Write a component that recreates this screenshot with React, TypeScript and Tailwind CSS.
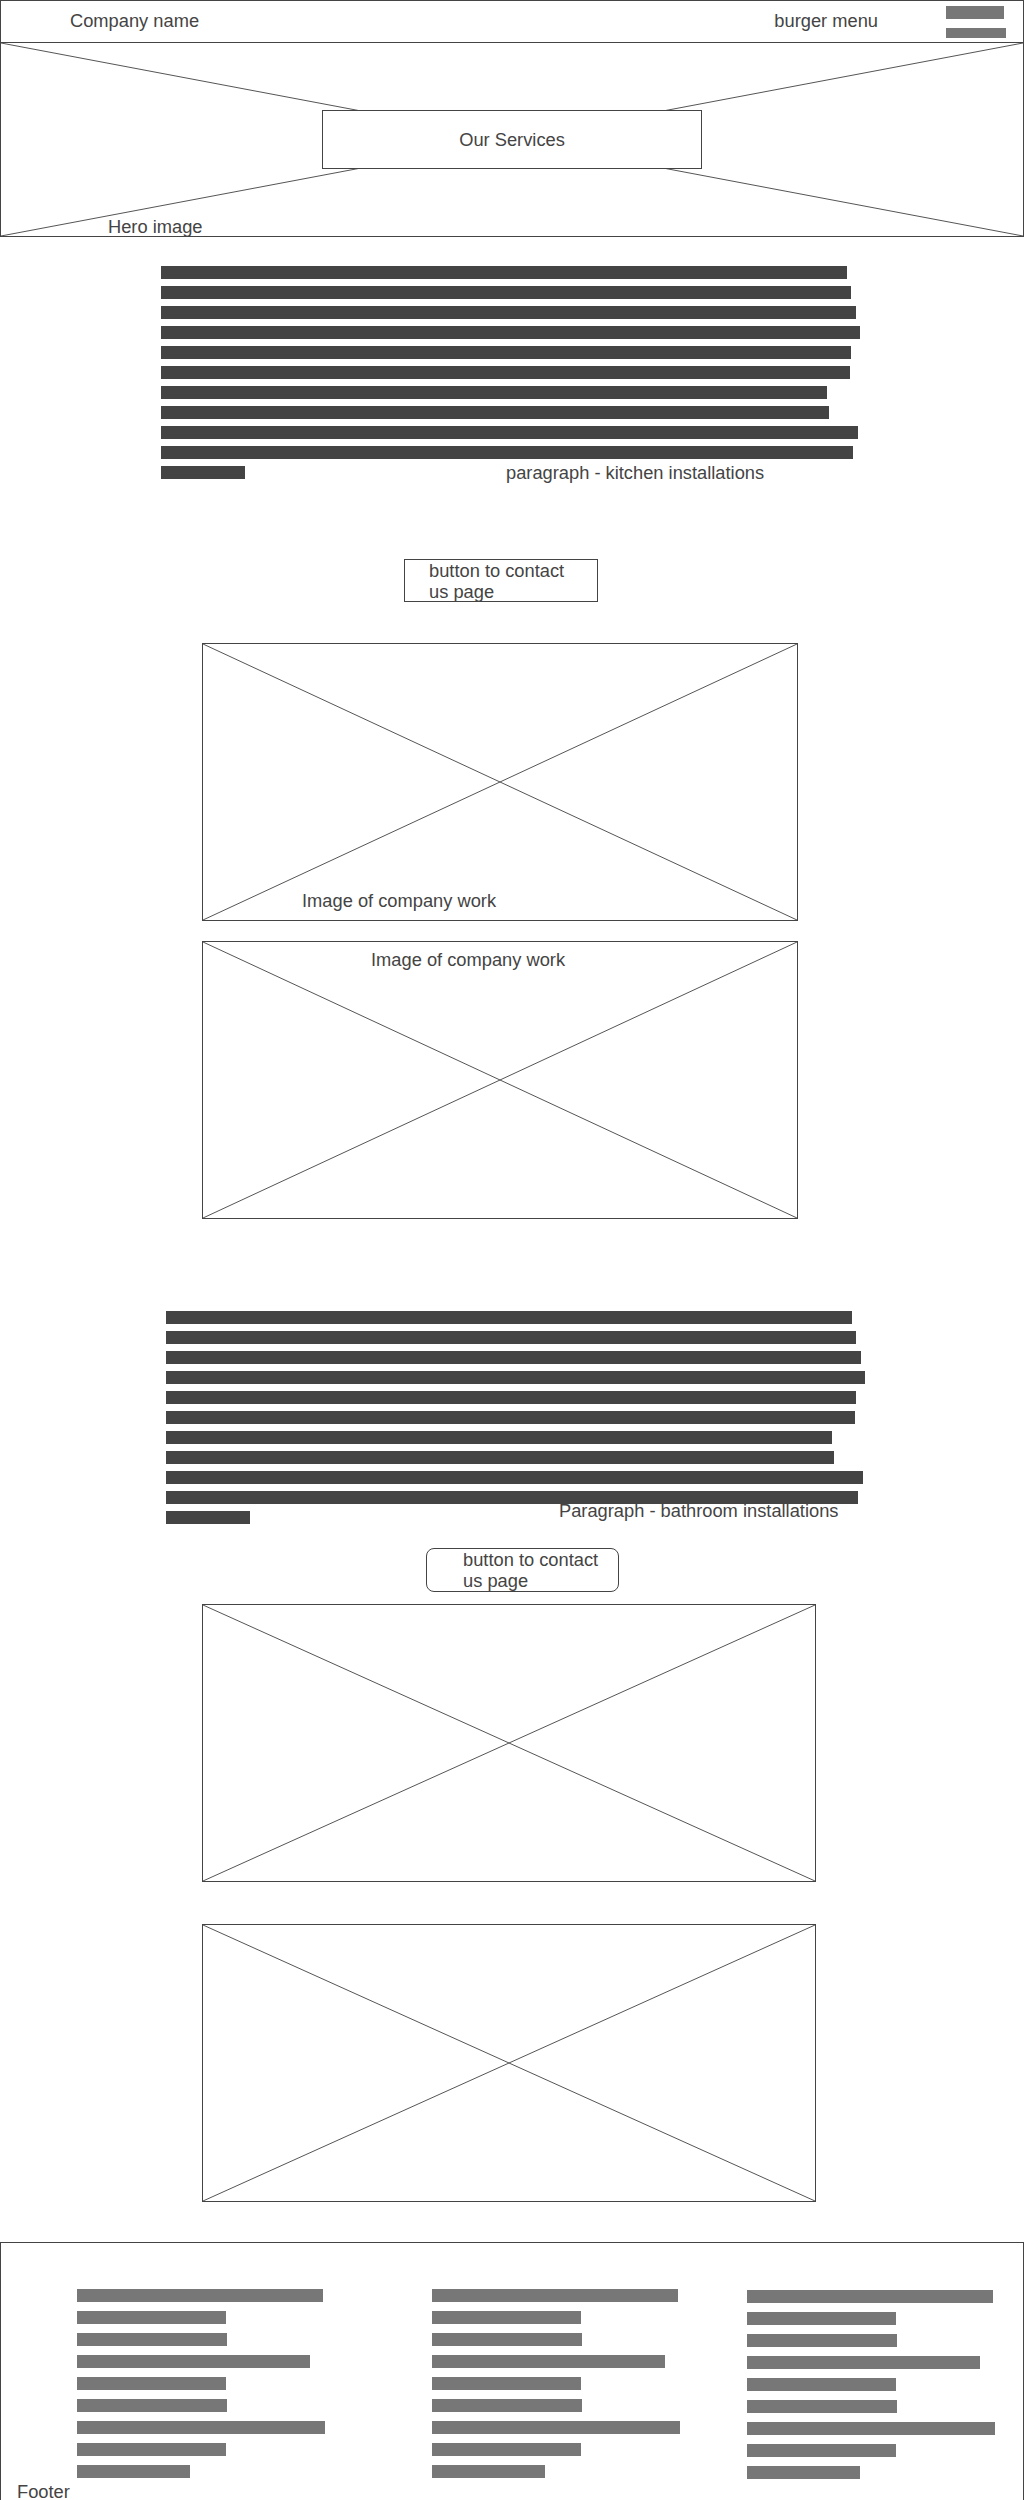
import React from "react";

const paragraphBars = [686, 690, 695, 699, 690, 689, 666, 668, 697, 692];
const footerBars = [246, 149, 150, 233, 149, 150, 248, 149, 113];

function Cross() {
  return (
    <svg
      className="absolute inset-0 h-full w-full"
      viewBox="0 0 100 100"
      preserveAspectRatio="none"
    >
      <line x1="0" y1="0" x2="100" y2="100" stroke="#555" strokeWidth="1" vectorEffect="non-scaling-stroke" />
      <line x1="100" y1="0" x2="0" y2="100" stroke="#555" strokeWidth="1" vectorEffect="non-scaling-stroke" />
    </svg>
  );
}

function Paragraph({ left, label, gap, lift }: { left: string; label: string; gap: string; lift: string }) {
  return (
    <div className={`${left} flex flex-col gap-[7px]`}>
      {paragraphBars.map((w, i) => (
        <div key={i} className="h-[13px] bg-[#444]" style={{ width: w }} />
      ))}
      <div className="flex items-start">
        <div className="h-[13px] w-[84px] shrink-0 bg-[#444]" />
        <span className={`${gap} ${lift} whitespace-nowrap leading-[20px]`}>{label}</span>
      </div>
    </div>
  );
}

function FooterColumn({ className }: { className: string }) {
  return (
    <div className={`flex flex-col gap-[9px] ${className}`}>
      {footerBars.map((w, i) => (
        <div key={i} className="h-[13px] bg-[#777]" style={{ width: w }} />
      ))}
    </div>
  );
}

export default function App() {
  return (
    <div className="min-h-[2500px] bg-white font-['Liberation_Sans',Arial,sans-serif] text-[18.3px] text-[#444]">
      {/* Header */}
      <header className="flex h-[43px] border border-[#444] leading-[20px]">
        <span className="ml-[69px] mt-[10px]">Company name</span>
        <span className="ml-auto mt-[10px]">burger menu</span>
        <div className="ml-[68px] mr-[17px] mt-[5px] flex flex-col items-start gap-[9px]">
          <div className="h-[13px] w-[58px] bg-[#777]" />
          <div className="h-[10px] w-[60px] bg-[#777]" />
        </div>
      </header>

      {/* Hero */}
      <section className="relative flex h-[194px] items-center justify-center border-x border-b border-[#444]">
        <Cross />
        <div className="relative flex h-[59px] w-[380px] items-center justify-center border border-[#444] bg-white">
          Our Services
        </div>
        <span className="absolute left-[107px] top-[174px] leading-[20px]">Hero image</span>
      </section>

      {/* Kitchen */}
      <div className="mt-[29px]">
        <Paragraph left="ml-[161px]" label="paragraph - kitchen installations" gap="ml-[261px]" lift="-mt-[3px]" />
      </div>

      <div className="ml-[404px] mt-[76px] h-[43px] w-[194px] border border-[#444] pl-[24px] leading-[21px]">
        button to contact
        <br />
        us page
      </div>

      <div className="relative ml-[202px] mt-[41px] flex h-[278px] w-[596px] flex-col justify-end border border-[#444] pb-[9px] pl-[99px]">
        <Cross />
        <span className="relative leading-[20px]">Image of company work</span>
      </div>
      <div className="relative ml-[202px] mt-[20px] h-[278px] w-[596px] border border-[#444] pl-[168px] pt-[4px]">
        <Cross />
        <span className="relative leading-[20px]">Image of company work</span>
      </div>

      {/* Bathroom */}
      <div className="mt-[92px]">
        <Paragraph left="ml-[166px]" label="Paragraph - bathroom installations" gap="ml-[309px]" lift="-mt-[10px]" />
      </div>

      <div className="ml-[426px] mt-[24px] h-[44px] w-[193px] rounded-[8px] border border-[#444] pl-[36px] leading-[21px]">
        button to contact
        <br />
        us page
      </div>

      <div className="relative ml-[202px] mt-[12px] h-[278px] w-[614px] border border-[#444]">
        <Cross />
      </div>
      <div className="relative ml-[202px] mt-[42px] h-[278px] w-[614px] border border-[#444]">
        <Cross />
      </div>

      {/* Footer */}
      <footer className="mt-[40px] h-[280px] border-x border-t border-[#444] pt-[46px]">
        <div className="flex items-start">
          <FooterColumn className="ml-[76px] w-[355px]" />
          <FooterColumn className="w-[315px]" />
          <FooterColumn className="mt-[1px]" />
        </div>
        <div className="mt-[3px] pl-[16px] leading-[20px]">Footer</div>
      </footer>
    </div>
  );
}
